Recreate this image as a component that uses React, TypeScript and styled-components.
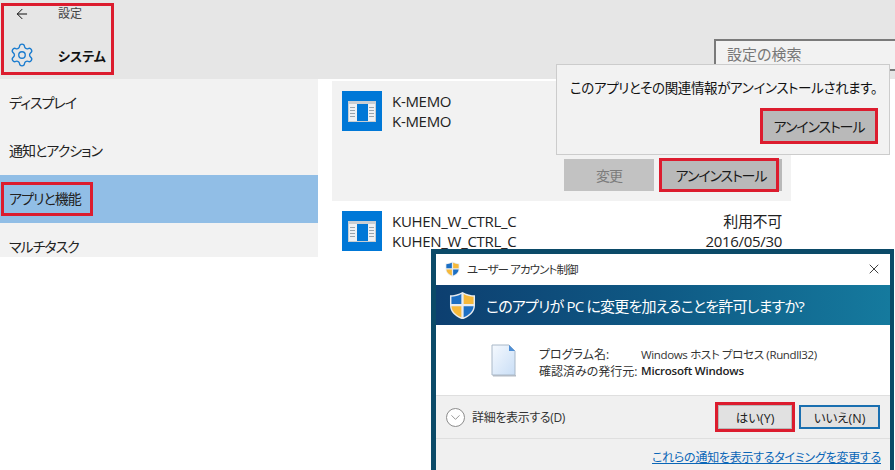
import React from 'react';
import styled, { createGlobalStyle } from 'styled-components';
import { ArrowLeft, ChevronDown, Settings, X } from 'lucide-react';

const Global = createGlobalStyle`
  html, body { margin: 0; padding: 0; background: #fff; }
  body {
    font-family: "Open Sans", "Noto Sans CJK JP", sans-serif;
    font-feature-settings: "palt";
    color: #1a1a1a;
  }
  * { box-sizing: border-box; }
`;

const Page = styled.div`
  position: relative;
  width: 895px;
  height: 470px;
  overflow: hidden;
  background: #fff;
`;

const Header = styled.header`
  height: 79px;
  background: #e6e6e6;
  padding: 3px 0 3px 1px;
  display: flex;
  align-items: flex-start;
  justify-content: space-between;
`;

const TitleGroup = styled.div`
  width: 113px;
  height: 72px;
  border: 3px solid #dc1c2e;
  display: grid;
  grid-template-columns: 54px 1fr;
  grid-template-rows: 16px 1fr;
  align-items: center;
`;

const IconCell = styled.div<{ $pad: number; $top?: number }>`
  display: flex;
  align-items: center;
  padding-left: ${p => p.$pad}px;
  padding-top: ${p => p.$top ?? 0}px;
`;

const Crumb = styled.div`
  font-size: 12px;
  color: #444;
  line-height: 16px;
  white-space: nowrap;
`;

const PageTitle = styled.div`
  font-size: 13px;
  font-weight: 700;
  color: #111;
  padding-top: 17px;
  white-space: nowrap;
`;

const SearchBox = styled.div`
  width: 181px;
  height: 32px;
  margin-top: 36px;
  border: 2px solid #7a7a7a;
  border-right: 0;
  background: #f2f2f2;
  padding: 0 11px;
  font-size: 15px;
  line-height: 27px;
  color: #777;
`;

const Body = styled.div`
  display: grid;
  grid-template-columns: 318px 1fr;
  column-gap: 14px;
  height: 178px;
  overflow: hidden;
`;

const Sidebar = styled.nav`
  background: #f2f2f2;
  height: 178px;
  overflow: hidden;
`;

const NavRow = styled.div<{ $active?: boolean }>`
  height: 48px;
  flex: none;
  padding-left: ${p => (p.$active ? '1px' : '9px')};
  padding-bottom: ${p => (p.$active ? '0' : '2px')};
  display: flex;
  align-items: center;
  font-size: 14px;
  letter-spacing: -1px;
  white-space: nowrap;
  color: #222;
  background: ${p => (p.$active ? '#91bee6' : 'transparent')};
`;

const NavMark = styled.span`
  border: 3px solid #dc1c2e;
  height: 34px;
  width: 92px;
  padding: 0 0 2px 5px;
  display: flex;
  align-items: center;
  white-space: nowrap;
`;

const Main = styled.main`
  padding-top: 2px;
  width: 459px;
`;

const AppItem = styled.section<{ $open?: boolean }>`
  height: ${p => (p.$open ? '120px' : 'auto')};
  background: ${p => (p.$open ? '#f2f2f2' : 'transparent')};
  padding: 10px 9px 0 10px;
`;

const AppRow = styled.div`
  display: flex;
  gap: 10px;
`;

const AppTile = styled.div`
  width: 40px;
  height: 40px;
  flex: none;
  background: #0078d7;
  display: flex;
  align-items: center;
  justify-content: center;
`;

const AppText = styled.div`
  flex: 1;
  font-size: 15px;
  line-height: 20px;
  color: #222;
  letter-spacing: -0.3px;
`;

const AppMeta = styled.div`
  font-size: 15px;
  line-height: 20px;
  color: #222;
  text-align: right;
  letter-spacing: -0.3px;
`;

const ItemActions = styled.div`
  display: flex;
  justify-content: flex-end;
  gap: 6px;
  margin-top: 28px;
`;

const FlatButton = styled.div<{ $disabled?: boolean; $w: number; $h: number }>`
  position: relative;
  width: ${p => p.$w}px;
  height: ${p => p.$h}px;
  background: ${p => (p.$disabled ? '#c2c2c2' : '#b9b9b9')};
  color: ${p => (p.$disabled ? '#7c7c7c' : '#1a1a1a')};
  font-size: 14px;
  letter-spacing: -1.1px;
  white-space: nowrap;
  display: flex;
  align-items: center;
  justify-content: center;
`;

const ButtonMark = styled.span<{ $right: number }>`
  position: absolute;
  inset: -1px ${p => p.$right}px -1px -1px;
  border: 3px solid #dc1c2e;
`;

const Flyout = styled.div`
  position: absolute;
  left: 556px;
  top: 64px;
  width: 334px;
  height: 91px;
  background: #f2f2f2;
  border: 1px solid #cccccc;
  padding: 14px 11px 0 13px;
  display: flex;
  flex-direction: column;
  align-items: flex-end;
`;

const FlyoutText = styled.div`
  align-self: flex-start;
  font-size: 13.5px;
  letter-spacing: -0.35px;
  line-height: 18px;
  white-space: nowrap;
  color: #111;
  margin-bottom: 11px;
`;

const MarkedFlyoutButton = styled(FlatButton)`
  border: 3px solid #dc1c2e;
`;

const Dialog = styled.div`
  position: absolute;
  left: 431px;
  top: 249px;
  width: 463px;
  height: 221px;
  border: solid #0b4a68;
  border-width: 5px 4px 0 5px;
  background: #fff;
  display: flex;
  flex-direction: column;
  font-size: 12px;
`;

const DialogTitle = styled.div`
  height: 31px;
  display: flex;
  align-items: center;
  gap: 7px;
  padding: 0 8px 1px 9px;
  color: #333;
  font-size: 11.5px;
  letter-spacing: -0.9px;
`;

const Grow = styled.span`
  flex: 1;
`;

const Banner = styled.div`
  height: 40px;
  background: linear-gradient(90deg, #0d3f70 0%, #0f5a85 50%, #157a9e 100%);
  color: #fff;
  display: flex;
  align-items: center;
  gap: 10px;
  padding: 0 0 0 13px;
  font-size: 15px;
  letter-spacing: -0.8px;
`;

const DialogBody = styled.div`
  height: 70px;
  display: flex;
  padding: 19px 0 0 55px;
  gap: 22px;
`;

const InfoGrid = styled.div`
  display: grid;
  grid-template-columns: 102px auto;
  grid-auto-rows: 17px;
  align-items: center;
  font-size: 12px;
  color: #333;
  margin-top: 1px;
`;

const InfoValue = styled.span`
  font-size: 11.5px;
  letter-spacing: -0.35px;
`;

const InfoStrong = styled.span`
  font-size: 11.5px;
  letter-spacing: -0.2px;
  font-weight: 600;
  color: #222;
`;

const FooterTop = styled.div`
  height: 44px;
  background: #f0f0f0;
  border-top: 1px solid #dfdfdf;
  border-bottom: 1px solid #dfdfdf;
  display: flex;
  align-items: center;
  padding: 0 10px 0 10px;
`;

const RoundToggle = styled.span`
  width: 19px;
  height: 19px;
  border: 1px solid #8d8d8d;
  border-radius: 50%;
  background: #fff;
  color: #777;
  display: flex;
  align-items: center;
  justify-content: center;
`;

const DetailsLabel = styled.span`
  margin-left: 7px;
  font-size: 12px;
  letter-spacing: -0.35px;
  color: #333;
  flex: 1;
`;

const WinButton = styled.div<{ $primary?: boolean; $marked?: boolean }>`
  width: ${p => (p.$marked ? '80px' : '81px')};
  height: ${p => (p.$marked ? '30px' : '24px')};
  margin-left: ${p => (p.$primary ? '4px' : '0')};
  background: #e1e1e1;
  border: ${p => (p.$primary ? '2px solid #1a6fb0' : p.$marked ? '3px solid #dc1c2e' : '1px solid #adadad')};
  box-shadow: ${p => (p.$marked ? 'inset 0 0 0 1px #b8b8b8' : 'none')};
  display: flex;
  align-items: center;
  justify-content: center;
  font-size: 12.5px;
  color: #222;
`;

const FooterLink = styled.div`
  flex: 1;
  background: #f0f0f0;
  text-align: right;
  padding: 10px 9px 0 0;
  font-size: 12px;
  letter-spacing: -0.25px;
  line-height: 18px;
  color: #0a66b7;
  text-decoration: underline;
`;

const WindowGlyph = () => (
  <svg width="28" height="21" viewBox="0 0 28 21">
    <rect width="28" height="21" fill="#c9ced2" />
    <rect x="1" y="3" width="26" height="17" fill="#eef1f3" />
    <rect x="9" y="3" width="11" height="17" fill="#0078d7" />
    {[6, 9, 12, 15].map(y => (
      <rect key={y} x="2" y={y} width="5" height="1" fill="#9aa5ad" />
    ))}
    {[6, 9, 12, 15].map(y => (
      <rect key={y} x="21" y={y} width="5" height="1" fill="#9aa5ad" />
    ))}
  </svg>
);

const Shield = ({ size }: { size: number }) => (
  <svg width={size} height={size * 1.07} viewBox="0 0 28 30">
    <path d="M14 1 C10 3.5 5 4.5 1 4.5 V15 C1 22 7 27 14 29.5 C21 27 27 22 27 15 V4.5 C23 4.5 18 3.5 14 1 Z" fill="#e8ecef" />
    <path d="M12.8 3.2 C9.5 5 6 5.8 2.5 6 V13.5 H12.8 Z" fill="#1c6fc4" />
    <path d="M15.2 3.2 C18.5 5 22 5.8 25.5 6 V13.5 H15.2 Z" fill="#f6b93b" />
    <path d="M2.5 15.8 H12.8 V27.2 C7.5 25.2 3 21.5 2.5 15.8 Z" fill="#f6b93b" />
    <path d="M25.5 15.8 H15.2 V27.2 C20.5 25.2 25 21.5 25.5 15.8 Z" fill="#1c6fc4" />
  </svg>
);

const DocGlyph = () => (
  <svg width="26" height="33" viewBox="0 0 26 33">
    <defs>
      <linearGradient id="doc" x1="0" y1="0" x2="1" y2="1">
        <stop offset="0" stopColor="#f5f9fe" />
        <stop offset="1" stopColor="#c9def6" />
      </linearGradient>
    </defs>
    <path d="M1 1 H18 L24 7 V31 H1 Z" fill="url(#doc)" stroke="#a9b8c8" strokeWidth="1" />
    <path d="M18 1 L24 7 H18 Z" fill="#4f8fd6" />
    <rect x="2" y="31" width="23" height="1.5" fill="#b4bcc6" />
  </svg>
);

export default function App() {
  return (
    <Page>
      <Global />
      <Header>
        <TitleGroup>
          <IconCell $pad={10}><ArrowLeft size={16} strokeWidth={1.5} color="#111" /></IconCell>
          <Crumb>設定</Crumb>
          <IconCell $pad={5} $top={16}><Settings size={26} strokeWidth={1.25} color="#1b7ccf" /></IconCell>
          <PageTitle>システム</PageTitle>
        </TitleGroup>
        <SearchBox>設定の検索</SearchBox>
      </Header>
      <Body>
        <Sidebar>
          <NavRow>ディスプレイ</NavRow>
          <NavRow>通知とアクション</NavRow>
          <NavRow $active><NavMark>アプリと機能</NavMark></NavRow>
          <NavRow>マルチタスク</NavRow>
        </Sidebar>
        <Main>
          <AppItem $open>
            <AppRow>
              <AppTile><WindowGlyph /></AppTile>
              <AppText>K-MEMO<br />K-MEMO</AppText>
            </AppRow>
            <ItemActions>
              <FlatButton $disabled $w={90} $h={32}>変更</FlatButton>
              <FlatButton $w={122} $h={32}>アンインストール<ButtonMark $right={3} /></FlatButton>
            </ItemActions>
          </AppItem>
          <AppItem>
            <AppRow>
              <AppTile><WindowGlyph /></AppTile>
              <AppText>KUHEN_W_CTRL_C<br />KUHEN_W_CTRL_C</AppText>
              <AppMeta>利用不可<br />2016/05/30</AppMeta>
            </AppRow>
          </AppItem>
        </Main>
      </Body>
      <Flyout>
        <FlyoutText>このアプリとその関連情報がアンインストールされます。</FlyoutText>
        <MarkedFlyoutButton $w={118} $h={36}>アンインストール</MarkedFlyoutButton>
      </Flyout>
      <Dialog>
        <DialogTitle>
          <Shield size={15} />
          ユーザー アカウント制御
          <Grow />
          <X size={16} strokeWidth={1.3} color="#222" />
        </DialogTitle>
        <Banner>
          <Shield size={27} />
          このアプリが PC に変更を加えることを許可しますか?
        </Banner>
        <DialogBody>
          <DocGlyph />
          <InfoGrid>
            <span>プログラム名:</span>
            <InfoValue>Windows ホスト プロセス (Rundll32)</InfoValue>
            <span>確認済みの発行元:</span>
            <InfoStrong>Microsoft Windows</InfoStrong>
          </InfoGrid>
        </DialogBody>
        <FooterTop>
          <RoundToggle><ChevronDown size={15} strokeWidth={1.2} /></RoundToggle>
          <DetailsLabel>詳細を表示する(D)</DetailsLabel>
          <WinButton $marked>はい(Y)</WinButton>
          <WinButton $primary>いいえ(N)</WinButton>
        </FooterTop>
        <FooterLink>これらの通知を表示するタイミングを変更する</FooterLink>
      </Dialog>
    </Page>
  );
}
